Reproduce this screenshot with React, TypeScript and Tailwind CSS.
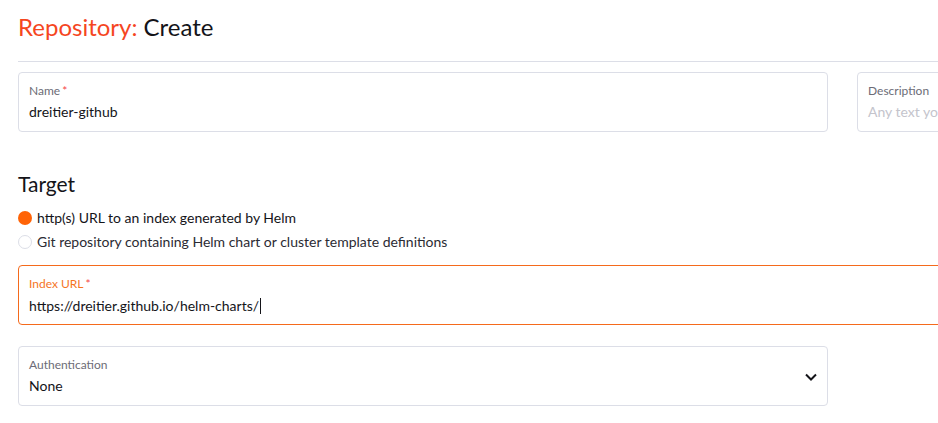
import React from "react";

function Field({
  label,
  value,
  required,
  placeholder,
  focused,
  className,
  children,
}: {
  label: string;
  value?: string;
  required?: boolean;
  placeholder?: string;
  focused?: boolean;
  className?: string;
  children?: React.ReactNode;
}) {
  return (
    <div
      className={`relative h-[60px] shrink-0 rounded-[4px] border bg-white pl-[10px] pt-[10px] ${
        focused ? "border-[#f56a1c]" : "border-[#dcdee7]"
      } ${className ?? ""}`}
    >
      <div
        className={`text-[12px] leading-[16px] ${
          focused ? "text-[#f5751f]" : "text-[#6c6c76]"
        }`}
      >
        {label}
        {required && <span className="ml-[2px] text-[#f64747]">*</span>}
      </div>
      <div className="mt-[3px] text-[14px] leading-[20px] text-[#141419]">
        {value ? (
          <span>
            {value}
            {focused && <span className="ml-[1px] inline-block h-[16px] w-px translate-y-[3px] bg-[#141419]" />}
          </span>
        ) : (
          <span className="text-[#c4c4cc]">{placeholder}</span>
        )}
      </div>
      {children}
    </div>
  );
}

export default function App() {
  return (
    <div className="h-[423px] w-[938px] overflow-hidden bg-white px-[18px] font-['Lato','Noto_Sans',sans-serif]">
      <h1 className="pt-[12px] text-[24px] leading-[30px] text-[#141419]">
        <span className="text-[#f5461f]">Repository:</span> Create
      </h1>
      <div className="mt-[19px] w-[1200px] border-t border-[#dcdee7]" />

      <div className="mt-[10px] flex gap-[29px]">
        <Field label="Name" required value="dreitier-github" className="w-[810px]" />
        <Field label="Description" placeholder="Any text you want that better describes this resource" className="w-[810px]" />
      </div>

      <h2 className="mt-[39px] text-[21px] leading-[26px] text-[#141419]">Target</h2>

      <div className="mt-[12px] flex flex-col gap-[6px] text-[14px] leading-[18px]">
        <label className="flex items-center gap-[5px] text-[#141419]">
          <span className="h-[14px] w-[14px] rounded-full bg-[#ff6306]" />
          http(s) URL to an index generated by Helm
        </label>
        <label className="flex items-center gap-[5px] text-[#2b2b33]">
          <span className="h-[14px] w-[14px] rounded-full border border-[#dcdee7] bg-white" />
          Git repository containing Helm chart or cluster template definitions
        </label>
      </div>

      <div className="mt-[14px]">
        <Field label="Index URL" required focused value="https://dreitier.github.io/helm-charts/" className="w-[1650px]" />
      </div>

      <div className="mt-[21px]">
        <Field label="Authentication" value="None" className="w-[810px]">
          <svg
            className="absolute right-[9px] top-[23px]"
            width="14"
            height="14"
            viewBox="0 0 14 14"
            fill="none"
            stroke="#141419"
            strokeWidth="2"
          >
            <path d="M2 4.5l5 5 5-5" />
          </svg>
        </Field>
      </div>
    </div>
  );
}
